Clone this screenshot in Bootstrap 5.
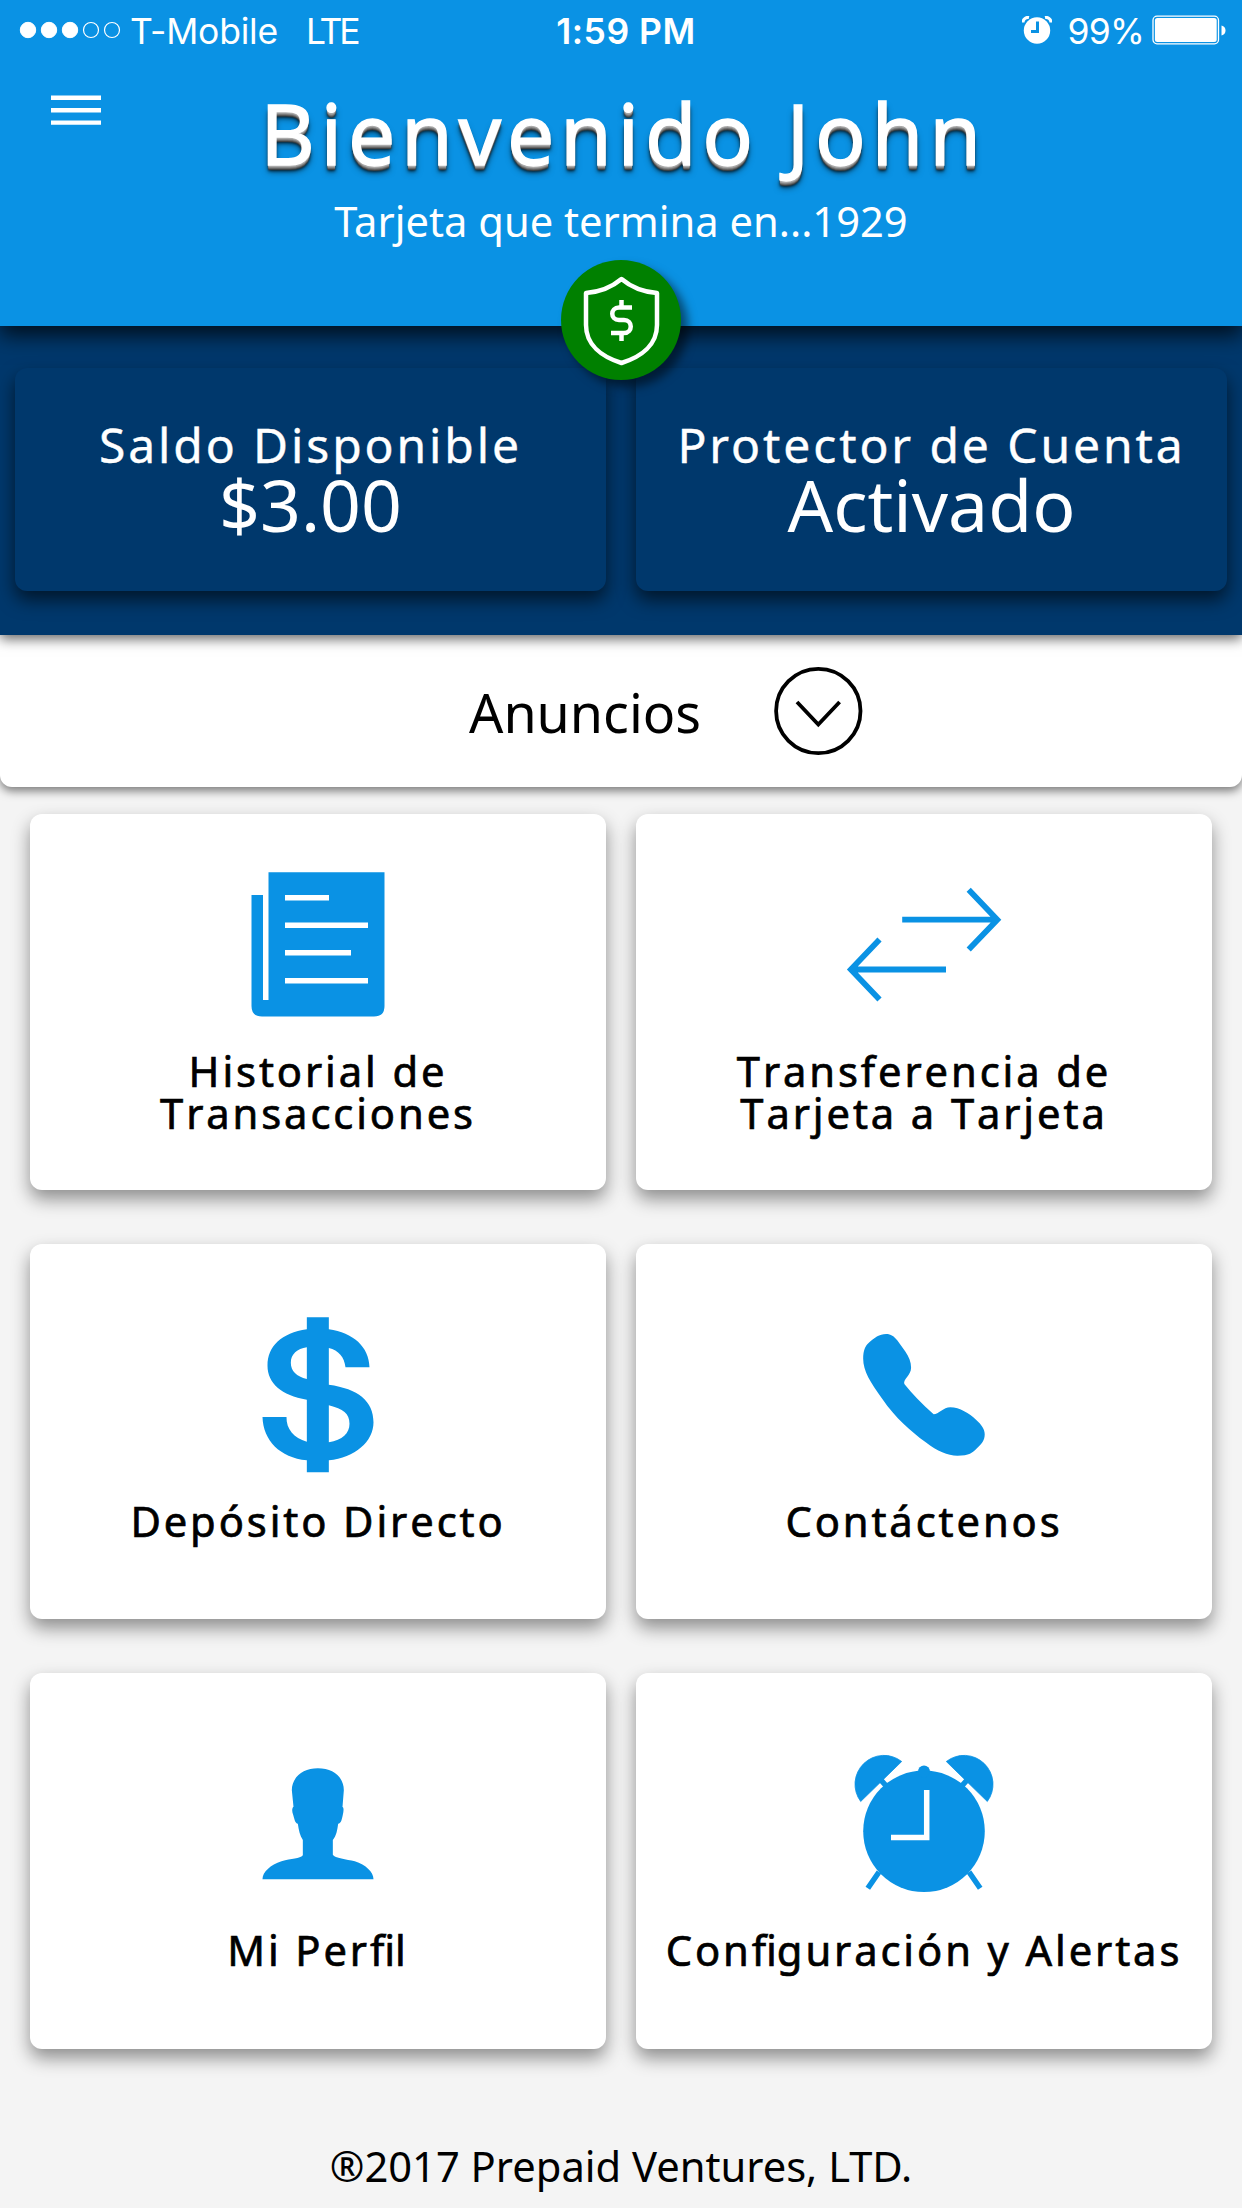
<!DOCTYPE html>
<html lang="es">
<head>
<meta charset="utf-8">
<meta name="viewport" content="width=device-width, initial-scale=1">
<title>Bienvenido</title>
<link href="https://cdn.jsdelivr.net/npm/bootstrap@5.3.0/dist/css/bootstrap.min.css" rel="stylesheet">
<style>
:root{--sky:#0a92e4;--navy:#00386c}
body{font-family:"Noto Sans","Open Sans",sans-serif;background:#f4f4f4;color:#000;font-size:41.7px;line-height:42px;width:1242px;height:2208px;overflow:hidden}
svg{display:block;flex:none}
.hero{background:var(--sky);color:#fff;height:326px;z-index:2;box-shadow:0 9px 20px rgba(0,0,0,.75)}
.statusbar{font-family:Inter,Roboto,sans-serif;font-size:35.5px;line-height:60px;height:60px;padding:0 16px 0 19px}
.statusbar span{padding-top:3px}
.statusbar .clock{font-weight:600;letter-spacing:.5px;margin-left:7px}
.carrier{margin-left:9px;letter-spacing:-.2px}
.net{margin-left:28px;letter-spacing:-3.2px}
.pct{margin:0 8px 0 16px;letter-spacing:-.8px}
.side{flex:1 1 0}
.menu-btn{left:51px;top:94px}
.welcome{font-size:84px;line-height:100px;font-weight:400;-webkit-text-stroke:1.3px #fff;letter-spacing:5.7px;margin:22.5px 0 0 5px;text-shadow:0 2px 0 #aaa,0 3px 0 #888,0 4px 0 #666,0 5px 1px #444,0 6px 3px rgba(0,0,0,.7),0 7px 6px rgba(0,0,0,.5)}
.subline{line-height:56px;margin-top:10px}
.shield{width:120px;height:120px;background:green;left:561px;top:260px;box-shadow:7px 7px 10px rgba(0,0,0,.5)}
.balances{background:var(--navy);color:#fff;height:309px;padding:42px 15px 44px;gap:30px;z-index:1;box-shadow:0 4px 12px rgba(0,0,0,.6)}
.tile{flex:1 1 0;border-radius:12px;box-shadow:0 9px 18px rgba(0,0,0,.6)}
.balance-tile{background:var(--navy);padding-top:46.5px}
.balance-label{font-size:48px;line-height:60px;letter-spacing:2.9px;-webkit-text-stroke:.4px #fff}
.balance-value{font-size:71.5px;line-height:59px}
.news{height:152px;border-radius:0 0 12px 12px;box-shadow:0 4px 10px rgba(0,0,0,.5);font-size:53.8px;padding-left:469px;gap:72px}
.news span{padding-top:1px}
.menu-grid{padding:27px 30px 0;gap:54px 30px;display:grid;grid-template-columns:1fr 1fr;grid-auto-rows:375.5px}
.menu-tile{background:#fff;color:#000;letter-spacing:2.9px;font-kerning:none;-webkit-text-stroke:.7px #000;box-shadow:0 9px 18px rgba(0,0,0,.42)}
.menu-tile svg{fill:var(--sky);-webkit-text-stroke:0}
.lig{letter-spacing:0}
.copyright{line-height:56px;margin-top:89px}
</style>
</head>
<body class="d-flex flex-column">
<header class="hero position-relative flex-shrink-0">
  <div class="statusbar d-flex align-items-center">
    <div class="side d-flex align-items-center">
      <svg width="102" height="18" viewBox="0 0 102 18" fill="#fff" stroke="#fff"><circle cx="9" cy="9" r="7.7"/><circle cx="30" cy="9" r="7.7"/><circle cx="51" cy="9" r="7.7"/><g fill="none" stroke-width="1.2"><circle cx="72" cy="9" r="7.5"/><circle cx="93" cy="9" r="7.5"/></g></svg>
      <span class="carrier">T-Mobile</span><span class="net">LTE</span>
    </div>
    <span class="clock">1:59 PM</span>
    <div class="side d-flex align-items-center justify-content-end">
      <svg width="30" height="28" viewBox="0 0 30 28"><circle cx="15" cy="14.5" r="13.2" fill="#fff"/><path d="M1 6.500A5 5 0 0 1 7 1.500M29 6.500A5 5 0 0 0 23 1.500" stroke="#fff" stroke-width="3" fill="none"/><path d="M15.500 5.500V15.500H9" stroke="#0a92e4" stroke-width="3" fill="none"/></svg>
      <span class="pct">99%</span>
      <svg width="74" height="30" viewBox="0 0 74 30"><rect x="1" y="1.200" width="65.500" height="27.600" rx="4" fill="none" stroke="#fff" stroke-width="1.300"/><rect x="2.900" y="3" width="61.800" height="24" rx="2.500" fill="#fff"/><path d="M69.500 10.500Q73.500 11.500 73.500 15.500T69.500 20.500Z" fill="#fff"/></svg>
    </div>
  </div>
  <svg class="menu-btn position-absolute" width="50" height="32" viewBox="0 0 50 32"><path d="M0 3.700H50M0 16.200H50M0 28.600H50" stroke="#fff" stroke-width="4.400"/></svg>
  <h1 class="welcome text-center">Bienvenido John</h1>
  <div class="subline text-center">Tarjeta que termina en...1929</div>
  <div class="shield position-absolute rounded-circle">
    <svg width="120" height="120" viewBox="561 260 120 120" fill="none" stroke="#fff" stroke-width="4.500"><path d="M621.500 279C612 287 599 292 586 293V325C586 345 602 357 621.500 363C641 357 657 345 657 325V293C644 292 631 287 621.500 279Z" stroke-linejoin="round"/><path d="M632 307.500H619C610 307.500 610 320 619 320H624C633 320 633 333 624 333H611M621.500 300V307M621.500 333V341"/></svg>
  </div>
</header>
<section class="balances d-flex position-relative flex-shrink-0">
  <div class="tile balance-tile text-center">
    <div class="balance-label">Saldo Disponible</div>
    <div class="balance-value">$3.00</div>
  </div>
  <div class="tile balance-tile text-center">
    <div class="balance-label">Protector de Cuenta</div>
    <div class="balance-value">Activado</div>
  </div>
</section>
<section class="news bg-white d-flex align-items-center flex-shrink-0">
  <span>Anuncios</span>
  <svg width="90" height="90" viewBox="773 665.5 90 90" fill="none" stroke="#000" stroke-width="3.8"><circle cx="818.300" cy="710.500" r="42.200"/><path d="M797 701.500L818.300 724L839.600 701.500"/></svg>
</section>
<main class="menu-grid">
  <a class="menu-tile tile text-decoration-none text-center d-flex flex-column align-items-center" href="#">
    <svg style="margin-top:54px" width="141" height="152" viewBox="248 868 141 152"><path d="M268.500 872.300H384.500V1006Q384.500 1016.500 374 1016.500H262Q251.500 1016.500 251.500 1006V895H263V1000H268.500Z"/><path fill="#fff" d="M285 895h44v5.500h-44zM285 922.500h83v5.500h-83zM285 950h66v5.500h-66zM285 978h83v5.400h-83z"/></svg>
    <span style="margin-top:30px">Historial de<br>Transacciones</span>
  </a>
  <a class="menu-tile tile text-decoration-none text-center d-flex flex-column align-items-center" href="#">
    <svg style="margin-top:54px" width="160" height="152" viewBox="844 868 160 152"><path d="M902.200 919.700H997M968.700 889.800L997.300 919.700L968.700 949.600M946 969.500H851M879.500 939.600L850.900 969.500L879.500 999.400" style="fill:none;stroke:var(--sky);stroke-width:5.800"/></svg>
    <span style="margin-top:30px">Transferencia de<br>Tarjeta a Tarjeta</span>
  </a>
  <a class="menu-tile tile text-decoration-none text-center d-flex flex-column align-items-center" href="#">
    <svg style="margin-top:72px" width="114" height="158" viewBox="483.500 107 342 474"><path fill-rule="evenodd" d="M621 147C545 158 503 198 503 256C503 308 545 345 621 358V484C582 473 559 446 560 410H488C490 480 540 532 621 540V576H687V540C765 533 821 484 821 426C821 362 775 325 687 313V203C716 210 734 230 737 261H809C808 200 760 157 687 147V111H621ZM621 201C592 205 573 222 573 247C573 272 590 288 621 296ZM687 375C730 386 749 400 749 430C749 458 728 479 687 486Z"/></svg>
    <span style="margin-top:26px">Depósito Directo</span>
  </a>
  <a class="menu-tile tile text-decoration-none text-center d-flex flex-column align-items-center" href="#">
    <svg style="margin-top:88px" width="126.700" height="126" viewBox="606.5 155 320 378" preserveAspectRatio="none"><path d="M612 235C612 210 618 197 625 189C640 172 653 161 670 161C682 161 690 168 698 180L718 213C728 230 733 245 733 262C733 285 712 296 716 311C735 340 760 370 790 402C802 402 815 381 832 381C856 381 880 400 897 418C912 434 919 447 919 462C919 480 911 492 900 503C888 518 880 526 850 526C825 526 800 513 770 486C730 450 695 415 660 355C630 305 612 272 612 235Z"/></svg>
    <span style="margin-top:42px">Contáctenos</span>
  </a>
  <a class="menu-tile tile text-decoration-none text-center d-flex flex-column align-items-center" href="#">
    <svg style="margin-top:94px" width="114" height="114" viewBox="183.500 140 342 342"><path d="M354 144C400 144 432 170 432 210L428 260C433 262 431 275 429 283C426 297 424 309 415 310C412 330 410 345 399 359V403C405 414 440 416 465 423C498 434 521 455 521 477H188C188 455 212 434 245 423C275 414 300 416 309 405V359C300 345 297 330 294 310C286 309 284 297 280 283C276 275 276 262 281 259L276 210C276 170 310 144 354 144Z"/></svg>
    <span style="margin-top:48px">Mi Per<span class="lig">fi</span>l</span>
  </a>
  <a class="menu-tile tile text-decoration-none text-center d-flex flex-column align-items-center" href="#">
    <svg style="margin-top:77px" width="144" height="148" viewBox="852 1750 144 148"><circle cx="924" cy="1831.300" r="60.800"/><circle cx="924" cy="1771.500" r="6"/><path d="M901.700 1761.500A28.900 28.900 0 0 0 860.700 1801.500ZM946.300 1761.500A28.900 28.900 0 0 1 987.300 1801.500Z" stroke="#0a92e4" stroke-width=".8"/><path d="M880 1779L888 1788M968 1779L960 1788M879 1872L867.800 1888.200M969 1872L980.200 1888.200" style="stroke:var(--sky);stroke-width:5.500"/><path d="M926.700 1790V1837.400H891" style="fill:none;stroke:#fff;stroke-width:5.500"/></svg>
    <span style="margin-top:31px">Con<span class="lig">fi</span>guración y Alertas</span>
  </a>
</main>
<footer class="copyright text-center">®2017 Prepaid Ventures, LTD.</footer>
<script src="https://cdn.jsdelivr.net/npm/bootstrap@5.3.0/dist/js/bootstrap.bundle.min.js"></script>
</body>
</html>
